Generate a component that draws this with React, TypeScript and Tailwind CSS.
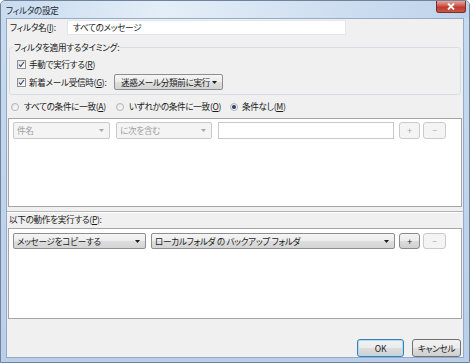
import React from 'react';

function Arrow({ disabled }: { disabled?: boolean }) {
  return (
    <svg width="5" height="3" viewBox="0 0 5 3" className="shrink-0">
      <path d="M0 0h5L2.5 3z" fill={disabled ? '#a8a8a8' : '#1a1a1a'} />
    </svg>
  );
}

function Combo({ text, className, disabled }: { text: string; className: string; disabled?: boolean }) {
  return (
    <div
      className={`flex items-center justify-between pl-[3px] pr-[5px] rounded-[2px] border ${
        disabled
          ? 'border-[#c9c9c9] bg-[#f4f4f4] text-[#a0a0a0]'
          : 'border-[#8e8e8e] bg-[linear-gradient(#f5f5f5,#ececec_50%,#dedede_51%,#d4d4d4)] text-[#1a1a1a]'
      } ${className}`}
    >
      <span className="whitespace-nowrap">{text}</span>
      <Arrow disabled={disabled} />
    </div>
  );
}

function SmallButton({ label, disabled, className }: { label: string; disabled?: boolean; className: string }) {
  return (
    <div
      className={`flex items-center justify-center rounded-[3px] border ${
        disabled
          ? 'border-[#cacaca] bg-[#f4f4f4] text-[#a8a8a8]'
          : 'border-[#8a8a8a] bg-[linear-gradient(#f4f4f4,#ebebeb_50%,#dcdcdc_51%,#d0d0d0)] text-[#1a1a1a]'
      } ${className}`}
    >
      {label}
    </div>
  );
}

function Checkbox() {
  return (
    <span className="flex items-center justify-center w-[9px] h-[9px] border border-[#8e8f8f] bg-[linear-gradient(135deg,#dcdcdc,#ffffff)] shrink-0">
      <svg width="7" height="7" viewBox="0 0 7 7">
        <path d="M1 3.6l1.7 1.8L6 1" fill="none" stroke="#3b4e6b" strokeWidth="1.2" />
      </svg>
    </span>
  );
}

function Radio({ checked }: { checked?: boolean }) {
  return (
    <span className="flex items-center justify-center w-[8px] h-[8px] rounded-full border border-[#b3b3b3] bg-[linear-gradient(135deg,#e2e2e2,#ffffff)] shrink-0">
      {checked && <span className="w-[4px] h-[4px] rounded-full bg-[#23426a]" />}
    </span>
  );
}

export default function App() {
  return (
    <div className="w-[470px] h-[363px] flex flex-col border border-[#6f839c] rounded-t-[5px] bg-[linear-gradient(#c7daef,#b9cfe9)] font-['Noto_Sans_CJK_JP',sans-serif] text-[8.6px] leading-[11px] tracking-[-0.3px] text-[#1a1a1a] [font-feature-settings:'palt'] overflow-hidden">
      {/* Title bar */}
      <div className="h-[17px] flex items-start justify-between pr-[3px] bg-[linear-gradient(to_right,#c9dbef,#e4eef8_35%,#d5e3f3_60%,#bed3eb)]">
        <span className="pl-[5px] pt-[4px] text-[#1e2a38]">フィルタの設定</span>
        <div className="w-[30px] h-[12px] flex items-center justify-center rounded-b-[3px] border border-t-0 border-[#7d2e28] bg-[linear-gradient(#e6a79f,#d0574b_45%,#bd3a2e_55%,#c9574a)]">
          <svg width="8" height="7" viewBox="0 0 8 7">
            <path d="M1 0.5l6 6M7 0.5l-6 6" stroke="#ffffff" strokeWidth="1.8" />
          </svg>
        </div>
      </div>

      {/* Client area */}
      <div className="mx-[5px] h-[340px] border border-[#93abc7] bg-[#f0f0f0] flex flex-col">
        {/* Filter name */}
        <div className="flex items-center h-[15px] mt-[1px] pl-[3px]">
          <span className="w-[57px] whitespace-nowrap">フィルタ名(<u>I</u>):</span>
          <div className="w-[279px] h-[15px] flex items-center pl-[5px] bg-white border border-[#e2e6ea]">すべてのメッセージ</div>
        </div>

        {/* Timing group */}
        <fieldset className="mx-[2px] mt-[7px] h-[53px] border border-[#d5dfe5] rounded-[3px] px-[7px]">
          <legend className="ml-[-4px] px-[1px] text-[#1a1a1a]">フィルタを適用するタイミング:</legend>
          <div className="flex items-center gap-[2px] h-[12px] mt-[5px]">
            <Checkbox />
            <span className="ml-[1px]">手動で実行する(<u>R</u>)</span>
          </div>
          <div className="flex items-center h-[16px] mt-[4px]">
            <Checkbox />
            <span className="ml-[3px] w-[85px] whitespace-nowrap">新着メール受信時(<u>G</u>):</span>
            <Combo text="迷惑メール分類前に実行" className="w-[109px] h-[16px] pl-[6px]" />
          </div>
        </fieldset>

        {/* Match radios */}
        <div className="flex items-center h-[12px] mt-[6px] pl-[4px]">
          <div className="w-[105px] flex items-center gap-[5px]">
            <Radio />
            <span className="whitespace-nowrap">すべての条件に一致(<u>A</u>)</span>
          </div>
          <div className="w-[114px] flex items-center gap-[5px]">
            <Radio />
            <span className="whitespace-nowrap">いずれかの条件に一致(<u>O</u>)</span>
          </div>
          <div className="flex items-center gap-[4px]">
            <Radio checked />
            <span className="whitespace-nowrap">条件なし(<u>M</u>)</span>
          </div>
        </div>

        {/* Conditions */}
        <div className="ml-[1px] mt-[5px] w-[454px] h-[90px] border border-[#a5a5a5] bg-white px-[4px] py-[3px]">
          <div className="flex items-center">
            <Combo text="件名" disabled className="w-[97px] h-[17px]" />
            <Combo text="に次を含む" disabled className="w-[96px] h-[17px] ml-[6px]" />
            <div className="w-[176px] h-[17px] ml-[6px] border border-[#c9c9c9] bg-white" />
            <SmallButton label="+" disabled className="w-[21px] h-[17px] ml-[5px]" />
            <SmallButton label="−" disabled className="w-[23px] h-[17px] ml-[3px]" />
          </div>
        </div>

        {/* Etched separator */}
        <div className="mt-[4px] h-[2px] border-t border-b border-t-[#b4b4b4] border-b-white" />

        <div className="h-[11px] mt-[1px] pl-[2px] whitespace-nowrap">以下の動作を実行する(<u>P</u>):</div>

        {/* Actions */}
        <div className="ml-[1px] mt-[3px] w-[454px] h-[91px] border border-[#a5a5a5] bg-white px-[4px] pt-[4px]">
          <div className="flex items-center">
            <Combo text="メッセージをコピーする" className="w-[133px] h-[16px]" />
            <Combo text="ローカルフォルダ の バックアップ フォルダ" className="w-[244px] h-[16px] ml-[5px]" />
            <SmallButton label="+" className="w-[21px] h-[16px] ml-[4px]" />
            <SmallButton label="−" disabled className="w-[23px] h-[16px] ml-[3px]" />
          </div>
        </div>

        {/* Dialog buttons */}
        <div className="flex justify-end mt-[20px] pr-[2px] gap-[8px]">
          <div className="w-[47px] h-[18px] flex items-center justify-center rounded-[3px] border border-[#3c7fb1] bg-[linear-gradient(#f2f2f2,#ebebeb_50%,#dddddd_51%,#cfcfcf)] shadow-[inset_0_0_0_1px_#a8def7]">
            OK
          </div>
          <div className="w-[49px] h-[18px] flex items-center justify-center rounded-[3px] border border-[#707070] bg-[linear-gradient(#f2f2f2,#ebebeb_50%,#dddddd_51%,#cfcfcf)]">
            キャンセル
          </div>
        </div>
      </div>
    </div>
  );
}
